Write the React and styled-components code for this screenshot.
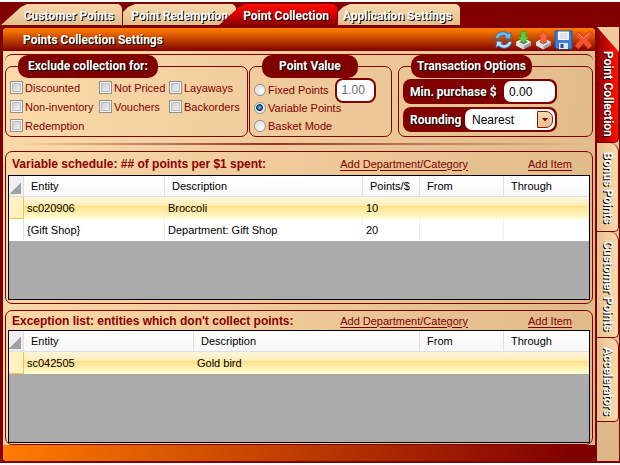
import React, { useState } from "react";
import styled, { createGlobalStyle } from "styled-components";

const GlobalStyle = createGlobalStyle`
  * {
    box-sizing: border-box;
  }

  body {
    margin: 0;
    background: #fff;
    color: #000;
    font: 11px/14px "Liberation Sans", Arial, sans-serif;
  }

  button,
  input,
  select {
    margin: 0;
    font: inherit;
  }
`;

const captionFont = `
  color: #fff;
  font-family: Roboto, "Liberation Sans", sans-serif;
  font-size: 12px;
  font-weight: 700;
  text-shadow: 1px 1px 0 #000;
  white-space: nowrap;
`;

const Window = styled.div`
  margin: 2px 0;
  background: #800000;
`;

const TopTabs = styled.nav`
  display: flex;
  height: 25px;
  padding: 2px 0 2px 1px;
`;

const TopTab = styled.button`
  ${captionFont}
  flex: none;
  position: relative;
  z-index: ${(props) => (props.$active ? 1 : 0)};
  width: ${(props) => props.$width}px;
  margin-left: ${(props) => (props.$active ? -18 : 0)}px;
  margin-right: 1px;
  padding: 2px 8px 0 0;
  border: 0;
  border-radius: 0 5px 0 0;
  background: ${(props) =>
    props.$active
      ? "linear-gradient(#f81000, #e00000 40%, #8c0000)"
      : "linear-gradient(#fad9ab, #e2bd8b)"};
  clip-path: ${(props) =>
    props.$slanted
      ? "polygon(0 100%, 20px 3px, 26px 0, 100% 0, 100% 100%)"
      : "polygon(0 100%, 0 8px, 5px 3px, 12px 0, 100% 0, 100% 100%)"};
  text-align: right;
`;

const Columns = styled.div`
  display: flex;
  padding: 0 1px 2px 3px;
`;

const Main = styled.main`
  flex: 1;
  min-width: 0;
  margin-top: 1px;
  border-radius: 4px;
  overflow: hidden;
  background: linear-gradient(100deg, #fcdaaa, #dfb988);
`;

const TitleBar = styled.header`
  display: flex;
  align-items: center;
  height: 23px;
  padding: 0 2px 0 20px;
  background: linear-gradient(#ff7c00, #f07000 15%, #800000);
`;

const Title = styled.h1`
  ${captionFont}
  flex: 1;
  margin: 0;
`;

const Tools = styled.div`
  display: flex;
  gap: 1px;
`;

const ToolButton = styled.button`
  display: flex;
  width: 19px;
  height: 20px;
  padding: 0;
  border: 0;
  background: none;
`;

const Options = styled.section`
  display: grid;
  grid-template-columns: 243fr 148fr 195fr;
  gap: 1px;
  margin: 3px 2px 0;
  border-top: 1px solid #800000;
  border-radius: 7px 7px 0 0;
`;

const Group = styled.fieldset`
  min-width: 0;
  height: 82px;
  margin: 0 ${(props) => props.$gap || 0}px 0 0;
  padding: 0 4px;
  border: 1px solid #800000;
  border-radius: 7px;
`;

const GroupTitle = styled.legend`
  ${captionFont}
  height: 23px;
  margin-left: 8px;
  padding: 0 ${(props) => props.$pad}px;
  border-radius: 10px;
  background: #800000;
  line-height: 23px;
`;

const CheckGrid = styled.div`
  display: grid;
  grid-template-columns: 89px 70px 1fr;
  grid-auto-rows: 19px;
`;

const Choice = styled.label`
  display: flex;
  align-items: center;
  gap: 2px;
  color: #800000;
  white-space: nowrap;
`;

const CheckBox = styled.input.attrs({ type: "checkbox" })`
  appearance: none;
  flex: none;
  width: 13px;
  height: 13px;
  border: 1px solid #8e8f8f;
  background: linear-gradient(135deg, #c4c8cf, #f6f6f6);
  box-shadow: inset 0 0 0 1px #f4f4f4, inset 0 0 0 2px #b9bcc2;

  &:checked {
    background: #1c5f93;
  }
`;

const RadioList = styled.div`
  padding-top: 3px;
`;

const RadioRow = styled.div`
  display: flex;
  align-items: center;
  gap: 6px;
  height: 18px;
`;

const Radio = styled.input.attrs({ type: "radio" })`
  appearance: none;
  flex: none;
  width: 12px;
  height: 12px;
  border: 1px solid #8e8f8f;
  border-radius: 50%;
  background: radial-gradient(circle at 60% 60%, #fff, #c9ccd2);
  box-shadow: inset 0 0 0 1px #f4f4f4;

  &:checked {
    background: radial-gradient(
      circle at 45% 45%,
      #7fd4f5 0,
      #1b6ea5 2px,
      #0b2c4c 3px,
      #e6e6e6 4px
    );
  }
`;

const PointsInput = styled.input`
  width: 41px;
  height: 25px;
  padding: 0 5px;
  border: 2px solid #800000;
  border-radius: 8px;
  background: #fff;
  color: #6d6d6d;
  font-size: 12px;
`;

const Field = styled.div`
  display: flex;
  align-items: center;
  width: 154px;
  height: 25px;
  margin: 1px 0 3px;
  padding: 2px 2px 2px 7px;
  border-radius: 8px;
  background: #800000;
`;

const FieldLabel = styled.label`
  ${captionFont}
  flex: 1;
`;

const AmountInput = styled.input`
  width: 51px;
  height: 21px;
  padding: 0 5px;
  border: 0;
  border-radius: 7px;
  background: #fff;
  color: #000;
  font-size: 12px;
`;

const SelectBox = styled.div`
  position: relative;
  width: 90px;
  height: 21px;
`;

const Select = styled.select`
  appearance: none;
  width: 100%;
  height: 100%;
  padding: 0 20px 0 7px;
  border: 0;
  border-radius: 7px;
  background: #fff;
  color: #000;
  font-size: 12px;
`;

const SelectArrow = styled.span`
  position: absolute;
  top: 2px;
  right: 2px;
  display: flex;
  align-items: center;
  justify-content: center;
  width: 16px;
  height: 17px;
  border: 1px solid #8c1a0a;
  border-radius: 0 7px 7px 0;
  background: linear-gradient(#fbdcb0, #e4bf8e);
  pointer-events: none;
`;

const Divider = styled.hr`
  height: 2px;
  margin: 6px 10px;
  border: 0;
  background: linear-gradient(90deg, transparent, #983028 45%, transparent);
`;

const ListPanel = styled.section`
  margin: 0 2px ${(props) => props.$below}px;
  padding: 0 2px ${(props) => props.$inset}px;
  border: 1px solid #800000;
  border-radius: 7px;
`;

const ListHeader = styled.header`
  display: flex;
  align-items: center;
  gap: 60px;
  height: ${(props) => props.$height}px;
  padding: 0 18px 0 4px;
`;

const ListTitle = styled.h2`
  flex: 1;
  min-width: 0;
  margin: 0;
  color: #8b0000;
  font-size: 12px;
  white-space: nowrap;
`;

const ListLink = styled.a`
  color: #800000;
  text-decoration: underline;
  text-underline-offset: 2px;
  white-space: nowrap;
`;

const Grid = styled.div`
  min-height: ${(props) => props.$height}px;
  border: 1px solid #000;
  background: #ababab;
`;

const Table = styled.table`
  width: 100%;
  border-spacing: 0;
  table-layout: fixed;
`;

const HeadCell = styled.th`
  width: ${(props) => (props.$width ? `${props.$width}px` : "auto")};
  height: 21px;
  padding: 0 7px;
  border-right: 1px solid #dfdfdf;
  border-bottom: 1px solid #dfdfdf;
  background: linear-gradient(#fff, #f7f7f7);
  font-weight: 400;
  text-align: left;
  white-space: nowrap;

  &:last-child {
    border-right: 0;
  }
`;

const CornerCell = styled(HeadCell)`
  padding: 0;
  background: linear-gradient(135deg, transparent 50%, #a2a2a2 50%) 0 6px / 12px
    12px no-repeat #efefef;
`;

const Row = styled.tr`
  background: ${(props) =>
    props.$selected
      ? "linear-gradient(#fdf6dc, #fdeeb8 38%, #ffe183 42%, #fff0b0 70%, #fffbd0)"
      : "#fff"};
`;

const RowMark = styled.td`
  border-right: 1px solid ${(props) => (props.$selected ? "#f3c25a" : "#e6e6e6")};
  border-bottom: 1px solid ${(props) => (props.$selected ? "#f3c25a" : "#fff")};
  background: ${(props) => (props.$selected ? "#fff1c0" : "#fff")};
`;

const Cell = styled.td`
  height: 22px;
  padding: 0 3px;
  border-right: 1px solid ${(props) => (props.$selected ? "transparent" : "#f0f0f0")};
  white-space: nowrap;
`;

const StatusBar = styled.footer`
  height: 16px;
  background: linear-gradient(100deg, #ff7c00, #800000 96%);
`;

const SideTabs = styled.nav`
  display: flex;
  flex-direction: column;
  width: 22px;
  margin-left: 2px;
  background: linear-gradient(#edcb9c, #dcb686);
`;

const SideTab = styled.button`
  ${captionFont}
  height: ${(props) => props.$height}px;
  padding: ${(props) => (props.$active ? 24 : 9)}px 0 0;
  border: 0;
  border-right: 1px solid #800000;
  border-bottom: 1px solid #800000;
  border-radius: 0 ${(props) => (props.$active ? 0 : 9)}px 5px 0;
  background: ${(props) =>
    props.$active
      ? "linear-gradient(90deg, #900000, #ff1000)"
      : "linear-gradient(90deg, #e6c290, #fad9ab)"};
  clip-path: ${(props) =>
    props.$active ? "polygon(0 0, 100% 25px, 100% 100%, 0 100%)" : "none"};
  line-height: 20px;
  text-align: left;
  writing-mode: vertical-rl;
`;

const topTabs = [
  { label: "Customer Points", width: 121, slanted: true },
  { label: "Point Redemption", width: 113 },
  { label: "Point Collection", width: 118, slanted: true, active: true },
  { label: "Application Settings", width: 122 },
];

const sideTabs = [
  { label: "Point Collection", height: 116, active: true },
  { label: "Bonus Points", height: 89 },
  { label: "Customer Points", height: 106 },
  { label: "Accelerators", height: 84 },
];

const exclusions = [
  "Discounted",
  "Not Priced",
  "Layaways",
  "Non-inventory",
  "Vouchers",
  "Backorders",
  "Redemption",
];

const scheduleColumns = [
  { label: "Entity", width: 141 },
  { label: "Description" },
  { label: "Points/$", width: 57 },
  { label: "From", width: 84 },
  { label: "Through", width: 85 },
];

const scheduleRows = [
  ["sc020906", "Broccoli", "10", "", ""],
  ["{Gift Shop}", "Department: Gift Shop", "20", "", ""],
];

const exceptionColumns = [
  { label: "Entity", width: 170 },
  { label: "Description" },
  { label: "From", width: 84 },
  { label: "Through", width: 85 },
];

const exceptionRows = [["sc042505", "Gold bird", "", ""]];

function RefreshIcon() {
  return (
    <svg width="19" height="20" viewBox="0 0 19 20">
      <g stroke="#1c66b8" strokeWidth="0.8" strokeLinejoin="round">
        <path
          d="M1 8.500C2 4 5.500 1.500 9.500 1.800c2 .2 3.500 1 4.600 2.200L17 2.500 16.500 9 10 8.500l2-2C9.500 4.500 6 5 4.500 8.500z"
          fill="#6cbcf2"
        />
        <path
          d="M18 11.500c-1 4.500-4.500 7-8.500 6.700-2-.2-3.500-1-4.600-2.200L2 17.500 2.500 11l6.500.5-2 2c2.500 2 6 1.500 7.500-2z"
          fill="#b5e0fb"
        />
      </g>
    </svg>
  );
}

function TrayIcon({ up }) {
  return (
    <svg width="19" height="20" viewBox="0 0 19 20">
      <path d="M2 12l7.500-4 7.500 4v3.500L9.500 19.500 2 15.500z" fill="#9a9da1" />
      <path d="M2 12l7.500-4 7.500 4-7.500 4z" fill="#f2f3f4" />
      <path d="M5 12l4.500-2.400L14 12l-4.500 2.400z" fill="#74777b" />
      <path d="M2 12l7.500 4v3.500L2 15.500z" fill="#dcdee0" />
      {up ? (
        <path
          d="M9.500 1.500l5.500 6h-2.500l-.5 5.500H7l-.5-5.500H4z"
          fill="#f8683c"
          stroke="#c23a14"
          strokeWidth="0.6"
        />
      ) : (
        <path
          d="M7 1.500h5V7h3l-5.500 6L4 7h3z"
          fill="#52d13a"
          stroke="#2c9a22"
          strokeWidth="0.6"
        />
      )}
    </svg>
  );
}

function SaveIcon() {
  return (
    <svg width="19" height="20" viewBox="0 0 19 20">
      <path
        d="M1 1h17v18H3l-2-2z"
        fill="#3b7fd6"
        stroke="#1b54ab"
        strokeWidth="1"
      />
      <path d="M4 1.500h11V10H4z" fill="#f5f7fa" />
      <path d="M5.500 4h8M5.500 6h8M5.500 8h8" stroke="#c4ccd6" />
      <path d="M5 13h9v6H5z" fill="#dfe5ec" />
      <path d="M6.500 14h3v4h-3z" fill="#1d4f9c" />
    </svg>
  );
}

function CloseIcon() {
  return (
    <svg width="19" height="20" viewBox="0 0 19 20">
      <path
        d="M5 1.500L9.500 6.500 15.500 1 18.500 4l-5 6 4.500 5.500-3.500 3.500-5-5.500L4.500 19 1 16l4.500-6L1 5z"
        fill="#f4532e"
        stroke="#d23414"
        strokeWidth="0.6"
        strokeLinejoin="round"
      />
      <path d="M4.500 3.500l5 5L15.500 3" stroke="#ff9270" fill="none" />
    </svg>
  );
}

function EntityList({ columns, rows, height }) {
  return (
    <Grid $height={height}>
      <Table>
        <thead>
          <tr>
            <CornerCell $width={15} aria-label="Select all" />
            {columns.map((column) => (
              <HeadCell key={column.label} $width={column.width}>
                {column.label}
              </HeadCell>
            ))}
          </tr>
        </thead>
        <tbody>
          {rows.map((row, index) => (
            <Row key={row[0]} $selected={index === 0}>
              <RowMark $selected={index === 0} />
              {row.map((value, column) => (
                <Cell key={column} $selected={index === 0}>
                  {value}
                </Cell>
              ))}
            </Row>
          ))}
        </tbody>
      </Table>
    </Grid>
  );
}

function App() {
  const [mode, setMode] = useState("variable");

  return (
    <>
      <GlobalStyle />
      <Window>
        <TopTabs>
          {topTabs.map((tab) => (
            <TopTab
              key={tab.label}
              $width={tab.width}
              $slanted={tab.slanted}
              $active={tab.active}
            >
              {tab.label}
            </TopTab>
          ))}
        </TopTabs>
        <Columns>
          <Main>
            <TitleBar>
              <Title>Points Collection Settings</Title>
              <Tools>
                <ToolButton aria-label="Refresh">
                  <RefreshIcon />
                </ToolButton>
                <ToolButton aria-label="Import">
                  <TrayIcon />
                </ToolButton>
                <ToolButton aria-label="Export">
                  <TrayIcon up />
                </ToolButton>
                <ToolButton aria-label="Save">
                  <SaveIcon />
                </ToolButton>
                <ToolButton aria-label="Close">
                  <CloseIcon />
                </ToolButton>
              </Tools>
            </TitleBar>

            <Options>
              <Group>
                <GroupTitle $pad={10}>Exclude collection for:</GroupTitle>
                <CheckGrid>
                  {exclusions.map((name) => (
                    <Choice key={name}>
                      <CheckBox />
                      {name}
                    </Choice>
                  ))}
                </CheckGrid>
              </Group>

              <Group $gap={5}>
                <GroupTitle $pad={17}>Point Value</GroupTitle>
                <RadioList>
                  <RadioRow>
                    <Choice>
                      <Radio
                        name="mode"
                        checked={mode === "fixed"}
                        onChange={() => setMode("fixed")}
                      />
                      Fixed Points
                    </Choice>
                    <PointsInput
                      aria-label="Fixed points value"
                      defaultValue="1.00"
                      disabled={mode !== "fixed"}
                    />
                  </RadioRow>
                  <RadioRow>
                    <Choice>
                      <Radio
                        name="mode"
                        checked={mode === "variable"}
                        onChange={() => setMode("variable")}
                      />
                      Variable Points
                    </Choice>
                  </RadioRow>
                  <RadioRow>
                    <Choice>
                      <Radio
                        name="mode"
                        checked={mode === "basket"}
                        onChange={() => setMode("basket")}
                      />
                      Basket Mode
                    </Choice>
                  </RadioRow>
                </RadioList>
              </Group>

              <Group>
                <GroupTitle $pad={6}>Transaction Options</GroupTitle>
                <Field>
                  <FieldLabel htmlFor="min-purchase">Min. purchase $</FieldLabel>
                  <AmountInput id="min-purchase" defaultValue="0.00" />
                </Field>
                <Field>
                  <FieldLabel htmlFor="rounding">Rounding</FieldLabel>
                  <SelectBox>
                    <Select id="rounding" defaultValue="Nearest">
                      <option>Nearest</option>
                      <option>Up</option>
                      <option>Down</option>
                    </Select>
                    <SelectArrow>
                      <svg width="6" height="4" viewBox="0 0 6 4">
                        <path d="M0 0h6L3 3.500z" fill="#800000" />
                      </svg>
                    </SelectArrow>
                  </SelectBox>
                </Field>
              </Group>
            </Options>

            <Divider />

            <ListPanel $below={6} $inset={3}>
              <ListHeader $height={23}>
                <ListTitle>Variable schedule: ## of points per $1 spent:</ListTitle>
                <ListLink href="#add-category">Add Department/Category</ListLink>
                <ListLink href="#add-item">Add Item</ListLink>
              </ListHeader>
              <EntityList
                columns={scheduleColumns}
                rows={scheduleRows}
                height={125}
              />
            </ListPanel>

            <ListPanel $below={0} $inset={1}>
              <ListHeader $height={19}>
                <ListTitle>
                  Exception list: entities which don't collect points:
                </ListTitle>
                <ListLink href="#add-exception-category">
                  Add Department/Category
                </ListLink>
                <ListLink href="#add-exception-item">Add Item</ListLink>
              </ListHeader>
              <EntityList
                columns={exceptionColumns}
                rows={exceptionRows}
                height={113}
              />
            </ListPanel>

            <StatusBar />
          </Main>

          <SideTabs>
            {sideTabs.map((tab) => (
              <SideTab key={tab.label} $height={tab.height} $active={tab.active}>
                {tab.label}
              </SideTab>
            ))}
          </SideTabs>
        </Columns>
      </Window>
    </>
  );
}

export default App;
